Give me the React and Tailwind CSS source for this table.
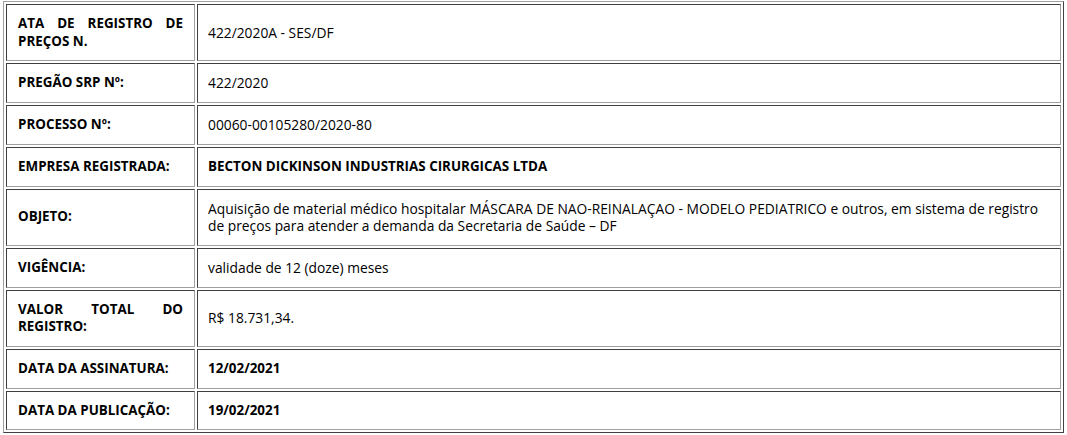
import React from "react";

const rows = [
  { label: "ATA DE REGISTRO DE PREÇOS N.", value: "422/2020A - SES/DF" },
  { label: "PREGÃO SRP Nº:", value: "422/2020" },
  { label: "PROCESSO Nº:", value: "00060-00105280/2020-80" },
  { label: "EMPRESA REGISTRADA:", value: "BECTON DICKINSON INDUSTRIAS CIRURGICAS LTDA", bold: true },
  {
    label: "OBJETO:",
    value:
      "Aquisição de material médico hospitalar MÁSCARA DE NAO-REINALAÇAO - MODELO PEDIATRICO e outros, em sistema de registro de preços para atender a demanda da Secretaria de Saúde – DF",
  },
  { label: "VIGÊNCIA:", value: "validade de 12 (doze) meses" },
  { label: "VALOR TOTAL DO REGISTRO:", value: "R$ 18.731,34." },
  { label: "DATA DA ASSINATURA:", value: "12/02/2021", bold: true },
  { label: "DATA DA PUBLICAÇÃO:", value: "19/02/2021", bold: true },
];

export default function App() {
  return (
    <div className="bg-white w-[1067px] h-[435px] pt-[1px] pl-[3px] font-['Open_Sans',sans-serif] text-[13.4px] leading-[17.7px] text-black">
      <table className="w-[1061px] border-separate border-spacing-[2px] border border-t-[#a0a0a0] border-l-[#a0a0a0] border-r-[#404040] border-b-[#404040]">
        <tbody>
          {rows.map((r, i) => (
            <tr key={i}>
              <td className="w-[189px] align-middle px-[11px] py-[10px] border border-t-[#404040] border-l-[#404040] border-r-[#a0a0a0] border-b-[#a0a0a0] font-bold text-justify">
                {r.label}
              </td>
              <td
                className={
                  "align-middle px-[10px] py-[10px] border border-t-[#404040] border-l-[#404040] border-r-[#a0a0a0] border-b-[#a0a0a0] " +
                  (r.bold ? "font-bold" : "text-[13.8px]")
                }
              >
                {r.value}
              </td>
            </tr>
          ))}
        </tbody>
      </table>
    </div>
  );
}
